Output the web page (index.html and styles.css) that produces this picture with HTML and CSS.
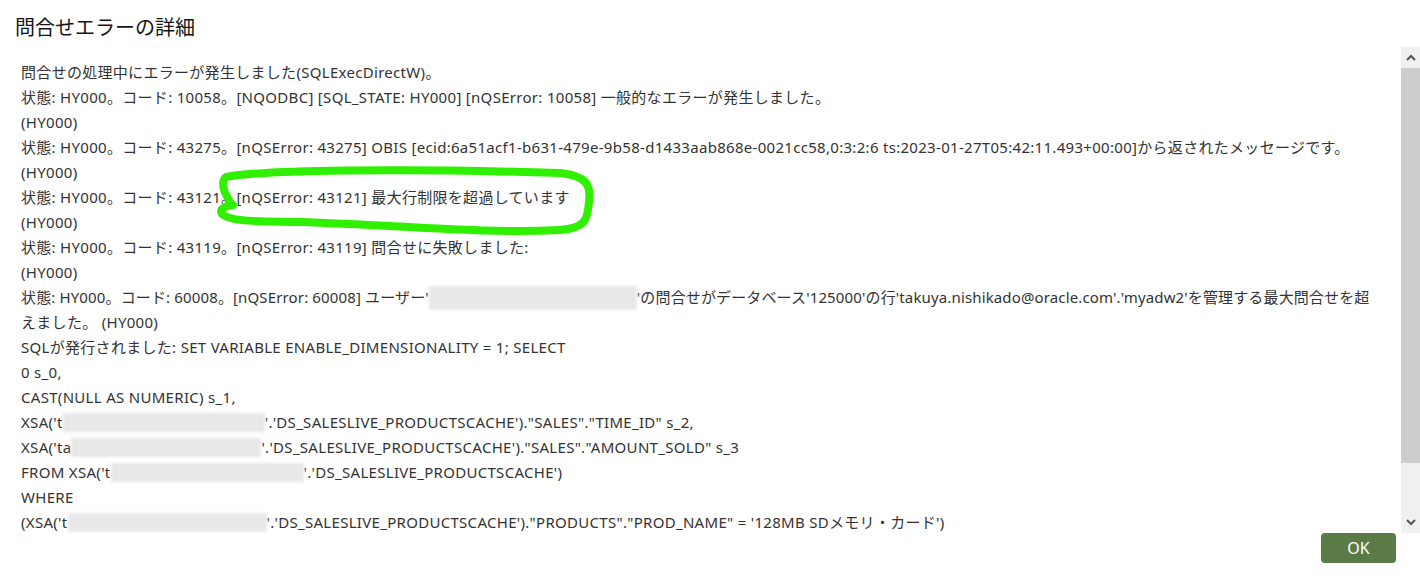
FILE: index.html
```html
<!DOCTYPE html>
<html lang="ja">
<head>
<meta charset="utf-8">
<title>問合せエラーの詳細</title>
<link rel="stylesheet" href="styles.css">
</head>
<body>
<div class="dialog">
  <h1 class="title">問合せエラーの詳細</h1>
  <div class="scroller">
    <div class="content">
      <div class="line">問合せの処理中にエラーが発生しました(SQLExecDirectW)。</div>
      <div class="line">状態: HY000。コード: 10058。[NQODBC] [SQL_STATE: HY000] [nQSError: 10058] 一般的なエラーが発生しました。</div>
      <div class="line">(HY000)</div>
      <div class="line">状態: HY000。コード: 43275。[nQSError: 43275] OBIS [ecid:6a51acf1-b631-479e-9b58-d1433aab868e-0021cc58,0:3:2:6 ts:2023-01-27T05:42:11.493+00:00]から返されたメッセージです。</div>
      <div class="line">(HY000)</div>
      <div class="line">状態: HY000。コード: 43121。[nQSError: 43121] 最大行制限を超過しています</div>
      <div class="line">(HY000)</div>
      <div class="line">状態: HY000。コード: 43119。[nQSError: 43119] 問合せに失敗しました:</div>
      <div class="line">(HY000)</div>
      <div class="line tight">状態: HY000。コード: 60008。[nQSError: 60008] ユーザー'<span class="redact r-user"></span>'の問合せがデータベース'125000'の行'takuya.nishikado@oracle.com'.'myadw2'を管理する最大問合せを超</div>
      <div class="line">えました。 (HY000)</div>
      <div class="line">SQLが発行されました: SET VARIABLE ENABLE_DIMENSIONALITY = 1; SELECT</div>
      <div class="line">0 s_0,</div>
      <div class="line">CAST(NULL AS NUMERIC) s_1,</div>
      <div class="line">XSA('t<span class="redact r-a"></span>'.'DS_SALESLIVE_PRODUCTSCACHE')."SALES"."TIME_ID" s_2,</div>
      <div class="line">XSA('ta<span class="redact r-b"></span>'.'DS_SALESLIVE_PRODUCTSCACHE')."SALES"."AMOUNT_SOLD" s_3</div>
      <div class="line">FROM XSA('t<span class="redact r-c"></span>'.'DS_SALESLIVE_PRODUCTSCACHE')</div>
      <div class="line">WHERE</div>
      <div class="line">(XSA('t<span class="redact r-d"></span>'.'DS_SALESLIVE_PRODUCTSCACHE')."PRODUCTS"."PROD_NAME" = '128MB SDメモリ・カード')</div>
    </div>
    <div class="scrollbar">
      <div class="sb-btn"><svg width="10" height="7" viewBox="0 0 10 7"><path d="M1 6 L5 2 L9 6" fill="none" stroke="#555" stroke-width="2"/></svg></div>
      <div class="sb-thumb"></div>
      <div class="sb-track"></div>
      <div class="sb-btn"><svg width="10" height="7" viewBox="0 0 10 7"><path d="M1 1 L5 5 L9 1" fill="none" stroke="#555" stroke-width="2"/></svg></div>
    </div>
  </div>
  <div class="footer">
    <button class="ok">OK</button>
  </div>
  <svg class="mark" width="1420" height="584" viewBox="0 0 1420 584">
    <path d="M232 205 C226 196 219 183 226 177 C262 170 400 168 560 173 C588 176 591 186 589 202 C587 216 589 228 560 230 C480 234 400 225 300 222 C258 221 230 222 222 214 C219 209 225 206 233 205" fill="none" stroke="#2ff000" stroke-width="8" stroke-linecap="round" stroke-linejoin="round"/>
  </svg>
</div>
</body>
</html>
```
FILE: styles.css
```css
html, body {
  margin: 0;
  padding: 0;
  background: #ffffff;
}
body {
  font-family: "Noto Sans", "Noto Sans CJK JP", sans-serif;
  color: #333333;
  width: 1420px;
  height: 584px;
  overflow: hidden;
}
.dialog {
  position: relative;
  width: 1420px;
  height: 584px;
  display: flex;
  flex-direction: column;
}
.title {
  margin: 0;
  padding: 15px 0 0 15px;
  height: 32px;
  font-size: 20px;
  font-weight: normal;
  line-height: 26px;
  color: #161513;
}
.scroller {
  height: 486px;
  display: flex;
  flex-direction: row;
}
.content {
  flex: 1;
  overflow: hidden;
  padding: 13px 0 0 21px;
  font-size: 15px;
  letter-spacing: 0.3px;
  line-height: 25px;
}
.line {
  white-space: nowrap;
  height: 25px;
}
.line.tight {
  letter-spacing: 0.14px;
}
.redact {
  display: inline-block;
  height: 19px;
  vertical-align: -4px;
  background: #e8e8e8;
  filter: blur(1.5px);
}
.r-user { width: 208px; height: 24px; vertical-align: -7px; }
.r-a { width: 202px; }
.r-b { width: 190px; }
.r-c { width: 193px; }
.r-d { width: 199px; }
.scrollbar {
  width: 19px;
  display: flex;
  flex-direction: column;
  background: #f0f0f0;
}
.sb-btn {
  height: 21px;
  display: flex;
  align-items: center;
  justify-content: center;
}
.sb-thumb {
  height: 395px;
  background: #cdcdcd;
}
.sb-track {
  flex: 1;
}
.footer {
  display: flex;
  justify-content: flex-end;
  padding: 0 24px 0 0;
}
.ok {
  width: 75px;
  height: 30px;
  border: none;
  border-radius: 4px;
  background: #5a7b45;
  color: #ffffff;
  font-family: "Noto Sans", sans-serif;
  font-size: 16px;
  padding: 0;
}
.mark {
  position: absolute;
  left: 0;
  top: 0;
  pointer-events: none;
}
```
